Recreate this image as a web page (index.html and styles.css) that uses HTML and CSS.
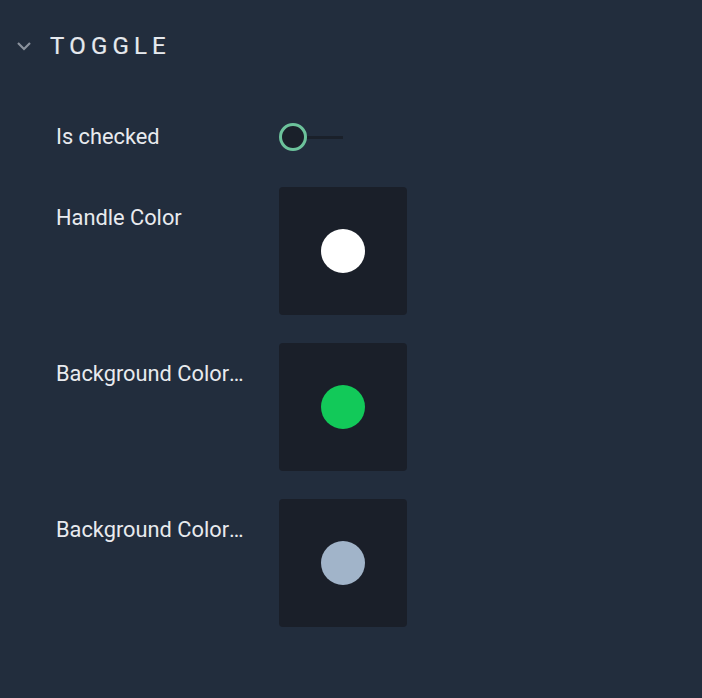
FILE: index.html
```html
<!DOCTYPE html>
<html>
<head>
<meta charset="utf-8">
<link rel="stylesheet" href="styles.css">
</head>
<body>
<div class="panel">
  <div class="header">
    <svg class="chev" width="16" height="10" viewBox="0 0 16 10"><path d="M2 2 L8 8 L14 2" fill="none" stroke="#8b929d" stroke-width="2.2"/></svg>
    <span class="title">TOGGLE</span>
  </div>
  <div class="rows">
    <div class="row row-toggle">
      <div class="label">Is checked</div>
      <div class="toggle"><span class="knob"></span><span class="track"></span></div>
    </div>
    <div class="row">
      <div class="label">Handle Color</div>
      <div class="swatch"><span class="dot white"></span></div>
    </div>
    <div class="row">
      <div class="label">Background Color On</div>
      <div class="swatch"><span class="dot green"></span></div>
    </div>
    <div class="row">
      <div class="label">Background Color Off</div>
      <div class="swatch"><span class="dot gray"></span></div>
    </div>
  </div>
</div>
</body>
</html>
```
FILE: styles.css
```css
html, body {
  margin: 0;
  padding: 0;
  background: #222d3d;
}
body {
  width: 702px;
  height: 698px;
  overflow: hidden;
  font-family: Roboto, "Noto Sans", sans-serif;
  color: #e8eaee;
}
.panel {
  padding: 31px 0 0 16px;
}
.header {
  display: flex;
  align-items: center;
  height: 30px;
}
.chev {
  display: block;
}
.title {
  margin-left: 18px;
  font-size: 24px;
  letter-spacing: 5.2px;
  color: #e6e9ee;
  line-height: 30px;
  -webkit-text-stroke: 0.2px #e6e9ee;
}
.rows {
  display: flex;
  flex-direction: column;
  gap: 28px;
  padding-left: 40px;
  margin-top: 62px;
}
.row {
  display: flex;
  align-items: flex-start;
}
.row-toggle {
  align-items: center;
  height: 28px;
  margin-bottom: 8px;
}
.label {
  width: 188px;
  margin-right: 35px;
  font-size: 21.8px;
  line-height: 28px;
  white-space: nowrap;
  overflow: hidden;
  text-overflow: ellipsis;
  color: #e8eaee;
}
.row .label {
  padding-top: 17px;
}
.row-toggle .label {
  padding-top: 0;
}
.toggle {
  display: flex;
  align-items: center;
}
.knob {
  width: 22px;
  height: 22px;
  border-radius: 50%;
  border: 3px solid #6cc29b;
  background: #1a202a;
  box-sizing: content-box;
}
.track {
  width: 36px;
  height: 3px;
  background: #1a202a;
}
.swatch {
  width: 128px;
  height: 128px;
  border-radius: 4px;
  background: #1a1f29;
  display: flex;
  align-items: center;
  justify-content: center;
}
.dot {
  width: 44px;
  height: 44px;
  border-radius: 50%;
}
.white { background: #ffffff; }
.green { background: #12c959; }
.gray { background: #a1b4c9; }
```
